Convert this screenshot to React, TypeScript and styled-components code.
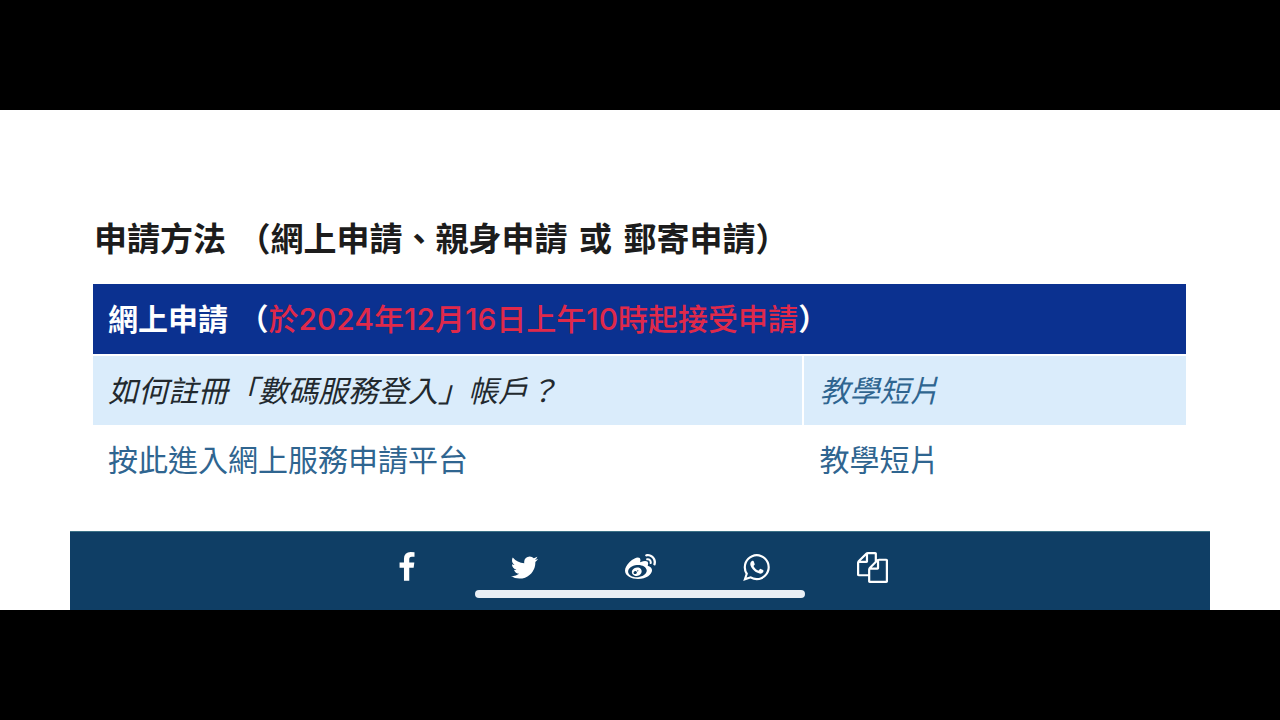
import React from "react";
import styled, { createGlobalStyle } from "styled-components";
import { FaWeibo } from "react-icons/fa";

const Global = createGlobalStyle`
  * { box-sizing: border-box; }
  body { margin: 0; background: #000; font-family: "Inter", "Noto Sans CJK TC", sans-serif; color: #1c1c1c; }
`;

const Page = styled.div`
  min-height: 100vh;
  padding: 110px 0;
  display: flex;
`;

const Screen = styled.div`
  flex: 1;
  background: #fff;
  padding: 104px 70px 0;
  display: flex;
  flex-direction: column;
`;

const Content = styled.main`
  flex: 1;
  padding: 0 24px 36px 23px;
`;

const Title = styled.h1`
  margin: 0 0 18px;
  padding-left: 1px;
  font-family: "DejaVu Sans", "Noto Sans CJK TC", sans-serif;
  font-size: 33px;
  line-height: 52px;
  font-weight: 600;
  white-space: pre-wrap;
`;

const Table = styled.table`
  width: 100%;
  border-collapse: collapse;
  table-layout: fixed;
  font-size: 30px;
  line-height: 40px;
`;

const HeadCell = styled.th`
  height: 71px;
  padding: 0 15px;
  background: #0b3190;
  border-bottom: 2px solid #fff;
  color: #fff;
  font-family: "DejaVu Sans", "Noto Sans CJK TC", sans-serif;
  text-align: left;
  font-weight: 600;
  white-space: pre-wrap;
`;

const Notice = styled.span`
  color: #e0294a;
  font-family: "Inter", "Noto Sans CJK TC", sans-serif;
  font-weight: 500;
`;

const Cell = styled.td<{ $shaded?: boolean }>`
  height: 70px;
  padding: 0 15px;
  background: ${(p) => (p.$shaded ? "#daecfb" : "#fff")};
  color: #22292e;
  font-style: ${(p) => (p.$shaded ? "italic" : "normal")};
  & + & { border-left: 2px solid #fff; }
`;

const WideCol = styled.col`
  width: 65%;
`;

const Link = styled.a`
  color: #2f6590;
  text-decoration: none;
`;

const ShareBar = styled.footer`
  height: 79px;
  background: #0f3e65;
  border-top: 1px solid #3b7186;
  display: flex;
  flex-direction: column;
  align-items: center;
  padding-top: 19px;
`;

const ShareList = styled.nav`
  display: flex;
  justify-content: center;
  gap: 84px;
`;

const ShareButton = styled.button`
  width: 32px;
  height: 32px;
  padding: 0;
  border: 0;
  background: none;
  color: #fff;
  font-size: 31px;
  display: grid;
  place-items: center;
  cursor: pointer;
`;

const HomeIndicator = styled.div`
  width: 330px;
  height: 8px;
  margin-top: 7px;
  border-radius: 4px;
  background: #e9eff5;
`;

const GlyphSvg = styled.svg`
  width: 31px;
  height: 31px;
  fill: currentColor;
`;

const Glyph = ({ d, left = 0 }: { d: string; left?: number }) => (
  <GlyphSvg viewBox={`${left} 0 1792 1792`} aria-hidden="true">
    <path d={d} />
  </GlyphSvg>
);

const facebook =
  "M1343 12v264h-157q-86 0-116 36t-30 108v189h293l-39 296h-254v759h-306v-759h-255v-296h255v-218q0-186 104-288.500t277-102.500q147 0 228 12z";
const twitter =
  "M1684 408q-67 98-162 167 1 14 1 42 0 130-38 259.500t-115.500 248.500-184.500 210.500-258 146-323 54.500q-271 0-496-145 35 4 78 4 225 0 401-138-105-2-188-64.500t-114-159.500q33 5 61 5 43 0 85-11-112-23-185.500-111.500t-73.500-205.500v-4q68 38 146 41-66-44-105-115t-39-154q0-88 44-163 121 149 294.500 238.500t371.500 99.500q-8-38-8-74 0-134 94.500-228.500t228.500-94.500q140 0 236 102 109-21 205-78-37 115-142 178 93-10 186-50z";
const whatsapp =
  "M1113 974q13 0 97.500 44t89.500 53q2 5 2 15 0 33-17 76-16 39-71 65.500t-102 26.500q-57 0-190-62-98-45-170-118t-148-185q-72-107-71-194v-8q3-91 74-158 24-22 52-22 6 0 18 1.500t19 1.500q19 0 26.500 6.500t15.500 27.500q8 20 33 88t25 75q0 21-34.500 57.500t-34.500 46.500q0 7 5 15 34 73 102 137 56 53 151 101 12 7 22 7 15 0 54-48.500t52-48.500zm-203 530q127 0 243.500-50t200.500-134 134-200.500 50-243.500-50-243.500-134-200.500-200.500-134-243.500-50-243.500 50-200.500 134-134 200.500-50 243.500q0 203 120 368l-79 233 242-77q158 104 345 104zm0-1382q153 0 292.500 60t240.500 161 161 240.500 60 292.500-60 292.500-161 240.500-240.500 161-292.500 60q-195 0-365-94l-417 134 136-405q-108-178-108-389 0-153 60-292.500t161-240.500 240.500-161 292.500-60z";
const copy =
  "M1696 384q40 0 68 28t28 68v1216q0 40-28 68t-68 28h-960q-40 0-68-28t-28-68v-288h-544q-40 0-68-28t-28-68v-672q0-40 20-88t48-76l408-408q28-28 76-48t88-20h416q40 0 68 28t28 68v328q68-40 128-40h416zm-544 213l-299 299h299v-299zm-640-384l-299 299h299v-299zm196 647l316-316v-416h-384v416q0 40-28 68t-68 28h-416v640h512v-256q0-40 20-88t48-76zm956 804v-1152h-384v416q0 40-28 68t-68 28h-416v640h896z";

export default function App() {
  return (
    <>
      <Global />
      <Page>
        <Screen>
          <Content>
            <Title>申請方法 （網上申請、親身申請 或 郵寄申請）</Title>
            <Table>
              <colgroup>
                <WideCol />
                <col />
              </colgroup>
              <thead>
                <tr>
                  <HeadCell colSpan={2}>
                    網上申請 （<Notice>於2024年12月16日上午10時起接受申請</Notice>）
                  </HeadCell>
                </tr>
              </thead>
              <tbody>
                <tr>
                  <Cell $shaded>如何註冊「數碼服務登入」帳戶？</Cell>
                  <Cell $shaded><Link href="#register-video">教學短片</Link></Cell>
                </tr>
                <tr>
                  <Cell><Link href="#platform">按此進入網上服務申請平台</Link></Cell>
                  <Cell><Link href="#platform-video">教學短片</Link></Cell>
                </tr>
              </tbody>
            </Table>
          </Content>
          <ShareBar>
            <ShareList aria-label="分享">
              <ShareButton aria-label="Facebook"><Glyph d={facebook} left={100} /></ShareButton>
              <ShareButton aria-label="Twitter"><Glyph d={twitter} /></ShareButton>
              <ShareButton aria-label="微博"><FaWeibo /></ShareButton>
              <ShareButton aria-label="WhatsApp"><Glyph d={whatsapp} /></ShareButton>
              <ShareButton aria-label="複製"><Glyph d={copy} /></ShareButton>
            </ShareList>
            <HomeIndicator />
          </ShareBar>
        </Screen>
      </Page>
    </>
  );
}
